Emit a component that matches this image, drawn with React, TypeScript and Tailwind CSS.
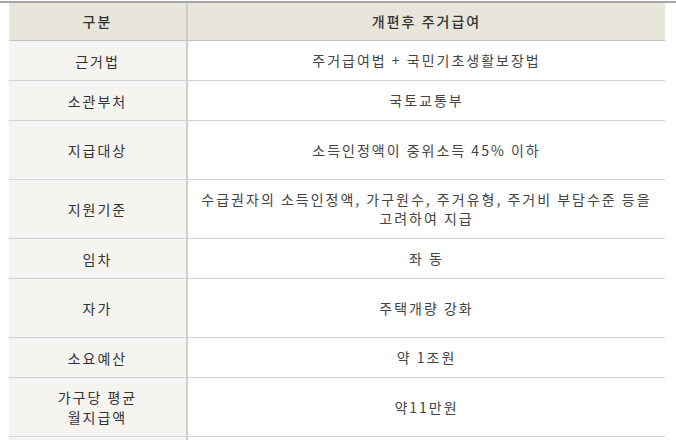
const rows = [
  { label: ["근거법"], value: ["주거급여법 + 국민기초생활보장법"], tall: false },
  { label: ["소관부처"], value: ["국토교통부"], tall: false },
  { label: ["지급대상"], value: ["소득인정액이 중위소득 45% 이하"], tall: true },
  { label: ["지원기준"], value: ["수급권자의 소득인정액, 가구원수, 주거유형, 주거비 부담수준 등을", "고려하여 지급"], tall: true },
  { label: ["임차"], value: ["좌 동"], tall: false },
  { label: ["자가"], value: ["주택개량 강화"], tall: true },
  { label: ["소요예산"], value: ["약 1조원"], tall: false },
  { label: ["가구당 평균", "월지급액"], value: ["약11만원"], tall: true },
  { label: [""], value: [""], tall: true },
];

export default function App() {
  return (
    <div
      className="w-[676px] h-[440px] overflow-hidden bg-white pt-[1px]"
      style={{ fontFamily: '"Noto Sans CJK KR", "Noto Sans", sans-serif' }}
    >
      <div className="border-t-2 border-[#a6a6a6]">
        <div className="ml-[9px] w-[656px] text-[14px] leading-[19px] tracking-[2px]">
          <div className="flex h-[38px] bg-[#e8e5da] border-b border-[#c4c4c4] text-[#333]">
            <div className="w-[179px] border-r-2 border-[#cfcfcf] flex items-center justify-center font-medium">구분</div>
            <div className="flex-1 flex items-center justify-center font-medium">개편후 주거급여</div>
          </div>
          {rows.map((r, i) => (
            <div
              key={i}
              className={`flex border-b border-[#d2d2d2] ${r.tall ? "h-[59px]" : "h-[40px]"}`}
            >
              <div className="w-[179px] bg-[#f5f4f0] border-r-2 border-[#cfcfcf] flex flex-col items-center justify-center text-[#333] leading-[20px]">
                {r.label.map((l) => (
                  <span key={l}>{l}</span>
                ))}
              </div>
              <div className="flex-1 flex flex-col items-center justify-center text-center text-[#444] px-2">
                {r.value.map((v) => (
                  <span key={v}>{v}</span>
                ))}
              </div>
            </div>
          ))}
        </div>
      </div>
    </div>
  );
}
